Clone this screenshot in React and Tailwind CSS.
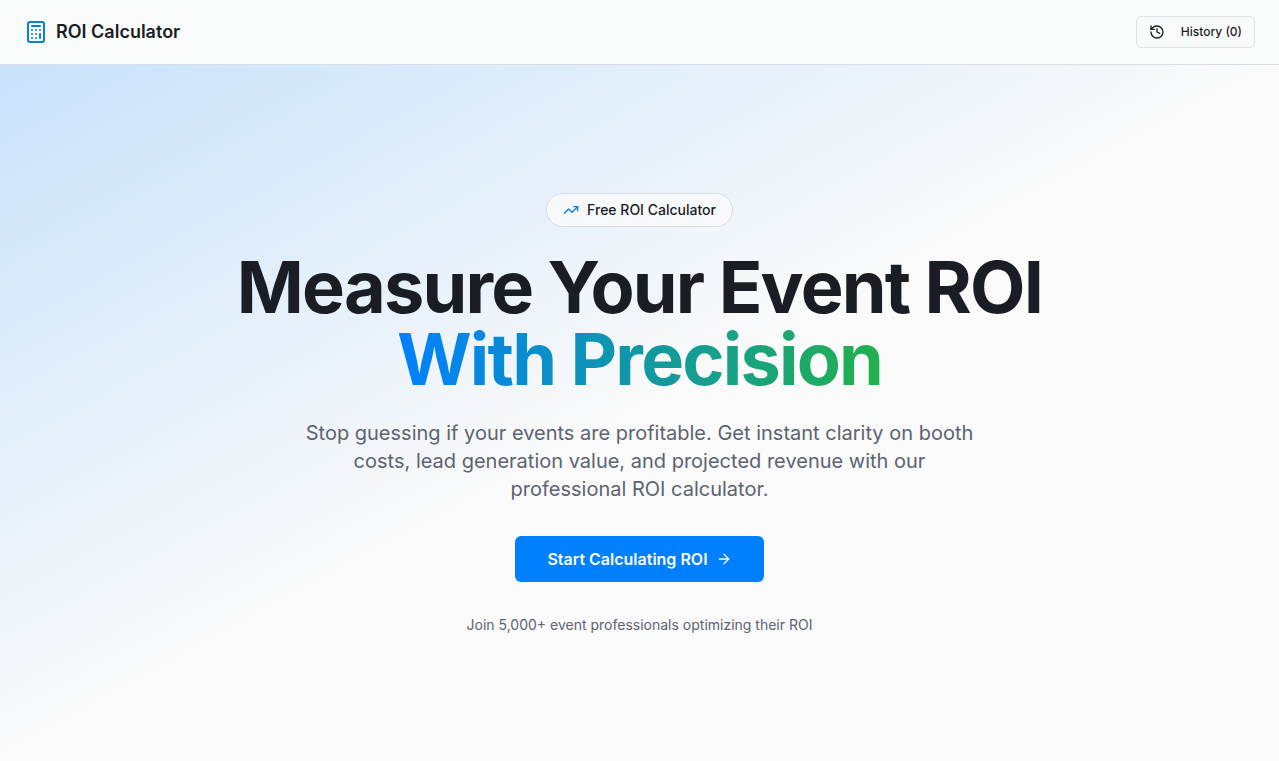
import { ArrowRight, Calculator, History, TrendingUp } from 'lucide-react';

function Header({ historyCount }) {
  return (
    <header className="border-b border-[#d9dde5] bg-[#f9fbfa]">
      <div className="flex h-16 items-center justify-between px-6">
        <div className="flex items-center gap-2">
          <Calculator className="size-6 text-[#0a80d0]" />
          <span className="text-lg font-semibold">ROI Calculator</span>
        </div>
        <button
          type="button"
          className="flex h-8 items-center gap-4 rounded-md border border-[#e0e3e8] px-3 text-xs font-medium hover:bg-gray-100"
        >
          <History className="size-4" />
          History ({historyCount})
        </button>
      </div>
    </header>
  );
}

function Hero() {
  return (
    <main className="flex flex-1 flex-col items-center justify-center bg-linear-to-br/srgb from-[#c8e2fb] via-[#fafafa] to-[#fafafa] px-6 pt-16 pb-[62px] text-center">
      <div className="mb-6 flex items-center gap-2 rounded-full border border-[#d9dde5] bg-[#fafafa]/80 px-4 py-1.5 text-sm font-medium">
        <TrendingUp className="size-4 text-[#0a80d0]" />
        <span>Free ROI Calculator</span>
      </div>

      <h1 className="mb-6 max-w-4xl text-7xl leading-none font-bold tracking-tight">
        <span className="block">Measure Your Event ROI</span>
        <span className="mx-auto block w-fit bg-linear-to-r/srgb from-[#0080ff] to-[#22b04c] bg-clip-text text-transparent">
          With Precision
        </span>
      </h1>

      <p className="mb-8 max-w-2xl text-xl text-[#5d6370]">
        Stop guessing if your events are profitable. Get instant clarity on booth costs, lead
        generation value, and projected revenue with our professional ROI calculator.
      </p>

      <div className="mb-8 py-px">
        <button
          type="button"
          className="flex items-center gap-2 rounded-md bg-[#0080ff] px-8 py-[11px] font-semibold text-[#fafafa] hover:bg-[#0080ff]/90"
        >
          Start Calculating ROI
          <ArrowRight className="size-4" />
        </button>
      </div>

      <p className="text-sm text-[#5d6370]">
        Join 5,000+ event professionals optimizing their ROI
      </p>
    </main>
  );
}

export default function App() {
  return (
    <div className="flex min-h-screen flex-col bg-[#fafafa] font-[Inter,sans-serif] text-[#1b1d24]">
      <Header historyCount={0} />
      <Hero />
    </div>
  );
}
